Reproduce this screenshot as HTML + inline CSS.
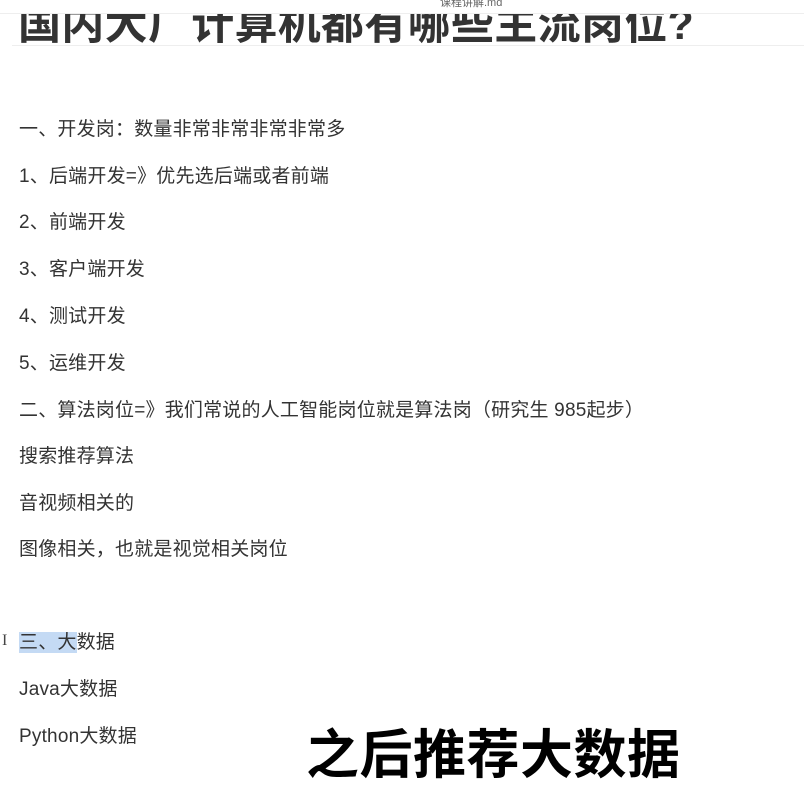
<!DOCTYPE html>
<html><head><meta charset="utf-8"><style>
body{margin:0;width:804px;height:795px;background:#fff;overflow:hidden;position:relative;font-family:"Liberation Sans","Noto Sans CJK SC",sans-serif;color:#333}
.hdr{position:absolute;left:0;top:0;width:804px;height:13px;background:#fff;border-bottom:1px solid #eee;z-index:2}
.hdr span{position:absolute;left:440px;top:-6px;font-size:11px;color:#666}
.title{position:absolute;left:18px;top:-10px;font-size:43px;font-weight:bold;color:#333;white-space:nowrap;letter-spacing:0.3px}
.rule{position:absolute;left:12px;top:45px;width:792px;height:1px;background:#eee}
.l{position:absolute;left:19px;font-size:19px;line-height:24px;white-space:nowrap;color:#333;letter-spacing:0.2px}
.sel{background:#c4daf4}
.cap{position:absolute;left:306px;top:713px;font-size:53px;font-weight:bold;color:#000;white-space:nowrap;letter-spacing:0.5px}
.cur{position:absolute;left:2px;top:632px;font-size:16px;color:#444;font-family:"Liberation Serif",serif}
</style></head><body>
<div class="title">国内大厂计算机都有哪些主流岗位?</div>
<div class="hdr"><span>课程讲解.md</span></div>
<div class="rule"></div>
<div class="l" style="top:118px">一、开发岗：数量非常非常非常非常多</div>
<div class="l" style="top:165px">1、后端开发=》优先选后端或者前端</div>
<div class="l" style="top:211px">2、前端开发</div>
<div class="l" style="top:258px">3、客户端开发</div>
<div class="l" style="top:305px">4、测试开发</div>
<div class="l" style="top:352px">5、运维开发</div>
<div class="l" style="top:399px">二、算法岗位=》我们常说的人工智能岗位就是算法岗（研究生 985起步）</div>
<div class="l" style="top:445px">搜索推荐算法</div>
<div class="l" style="top:492px">音视频相关的</div>
<div class="l" style="top:538px">图像相关，也就是视觉相关岗位</div>
<div class="cur">I</div>
<div class="l" style="top:631px"><span class="sel">三、大</span>数据</div>
<div class="l" style="top:678px">Java大数据</div>
<div class="l" style="top:725px">Python大数据</div>
<div class="cap">之后推荐大数据</div>
</body></html>
